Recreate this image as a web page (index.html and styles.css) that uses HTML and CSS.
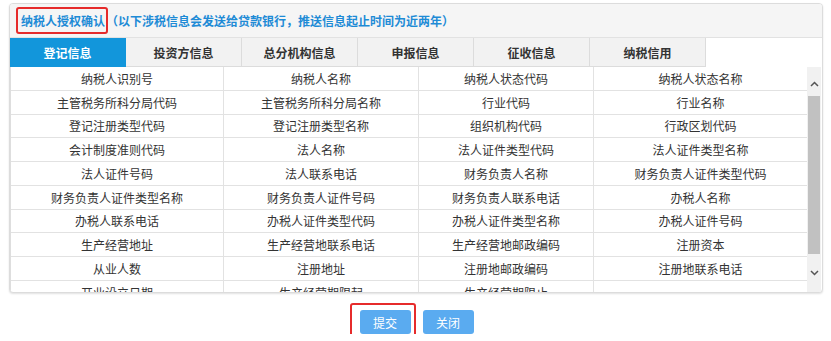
FILE: index.html
```html
<!DOCTYPE html>
<html>
	<head>
		<meta charset="utf-8">
		<title>纳税人授权确认</title>
		<link rel="stylesheet" href="styles.css">
	</head>
	<body>
		<div class="panel">
			<div class="panel-head">
				<span class="title mark">纳税人授权确认</span><span class="title">（以下涉税信息会发送给贷款银行，推送信息起止时间为近两年）</span>
			</div>
			<div class="tabs">
				<div class="tab active">登记信息</div>
				<div class="tab">投资方信息</div>
				<div class="tab">总分机构信息</div>
				<div class="tab">申报信息</div>
				<div class="tab">征收信息</div>
				<div class="tab">纳税信用</div>
			</div>
			<div class="body">
				<div class="grid">
					<table>
						<colgroup>
							<col style="width: 213px">
							<col style="width: 195px">
							<col style="width: 175px">
							<col style="width: 214px">
						</colgroup>
						<tr><td>纳税人识别号</td><td>纳税人名称</td><td>纳税人状态代码</td><td>纳税人状态名称</td></tr>
						<tr><td>主管税务所科分局代码</td><td>主管税务所科分局名称</td><td>行业代码</td><td>行业名称</td></tr>
						<tr><td>登记注册类型代码</td><td>登记注册类型名称</td><td>组织机构代码</td><td>行政区划代码</td></tr>
						<tr><td>会计制度准则代码</td><td>法人名称</td><td>法人证件类型代码</td><td>法人证件类型名称</td></tr>
						<tr><td>法人证件号码</td><td>法人联系电话</td><td>财务负责人名称</td><td>财务负责人证件类型代码</td></tr>
						<tr><td>财务负责人证件类型名称</td><td>财务负责人证件号码</td><td>财务负责人联系电话</td><td>办税人名称</td></tr>
						<tr><td>办税人联系电话</td><td>办税人证件类型代码</td><td>办税人证件类型名称</td><td>办税人证件号码</td></tr>
						<tr><td>生产经营地址</td><td>生产经营地联系电话</td><td>生产经营地邮政编码</td><td>注册资本</td></tr>
						<tr><td>从业人数</td><td>注册地址</td><td>注册地邮政编码</td><td>注册地联系电话</td></tr>
						<tr><td>开业设立日期</td><td>生产经营期限起</td><td>生产经营期限止</td><td></td></tr>
					</table>
				</div>
				<div class="scrollbar">
					<div class="sb-btn">
						<svg width="9" height="6" viewBox="0 0 9 6"><polyline points="1,5 4.5,1.5 8,5" fill="none" stroke="#555" stroke-width="1.5"/></svg>
					</div>
					<div class="sb-thumb"></div>
					<div class="sb-btn down">
						<svg width="9" height="6" viewBox="0 0 9 6"><polyline points="1,1 4.5,4.5 8,1" fill="none" stroke="#555" stroke-width="1.5"/></svg>
					</div>
				</div>
			</div>
		</div>
		<div class="actions">
			<button class="btn mark-btn">提交</button>
			<button class="btn">关闭</button>
		</div>
	</body>
</html>
```

FILE: styles.css
```css
* {
	margin: 0;
	padding: 0;
	box-sizing: border-box;
}

body {
	font-family: "Noto Sans CJK SC", "Noto Sans", sans-serif;
	font-size: 12px;
	color: #333;
	background: #fff;
}

/* 面板 */
.panel {
	margin: 3px 0 0 9px;
	width: 814px;
	border: 1px solid #dcdcdc;
	border-radius: 4px;
	box-shadow: 0 1px 2px rgba(0, 0, 0, .12);
	overflow: hidden;
	background: #fff;
}

.panel-head {
	height: 34px;
	display: flex;
	align-items: center;
	padding-left: 8px;
	background: #f5f5f5;
	border-bottom: 1px solid #e2e2e2;
}

.title {
	color: #1e8bd6;
	font-weight: bold;
	line-height: 23px;
}

/* 红框标注 */
.mark {
	position: relative;
	padding: 0 1px 0 3px;
}

.mark::after {
	content: "";
	position: absolute;
	left: -2px;
	top: -2px;
	right: -2px;
	bottom: -2px;
	border: 2px solid #e62b2b;
	border-radius: 3px;
}

/* 选项卡 */
.tabs {
	display: flex;
	height: 29px;
	background: #fff;
}

.tab {
	width: 116px;
	height: 29px;
	line-height: 29px;
	text-align: center;
	font-weight: bold;
	color: #333;
	background: #f2f2f2;
	border-right: 1px solid #dcdcdc;
	border-bottom: 1px solid #dcdcdc;
}

.tab.active {
	background: #1296db;
	color: #fff;
	border-color: #1296db;
}

/* 表格区 */
.body {
	display: flex;
	height: 225px;
}

.grid {
	flex: 1;
	overflow: hidden;
}

table {
	width: 797px;
	table-layout: fixed;
	border-collapse: separate;
	border-spacing: 0;
	border-left: 1px solid #dedede;
}

td {
	height: 23.75px;
	text-align: center;
	white-space: nowrap;
	color: #333;
	border-right: 1px solid #e2e2e2;
	border-bottom: 1px solid #e2e2e2;
}

/* 滚动条 */
.scrollbar {
	width: 14px;
	display: flex;
	flex-direction: column;
	align-items: center;
	background: #f1f1f1;
	margin-right: 1px;
}

.sb-btn {
	height: 29px;
	display: flex;
	align-items: center;
	justify-content: center;
	padding-top: 4px;
}

.sb-btn.down {
	margin-top: 7px;
	padding-top: 0;
	padding-bottom: 6px;
}

.sb-thumb {
	width: 12px;
	height: 158px;
	background: #c1c1c1;
}

/* 按钮 */
.actions {
	display: flex;
	justify-content: center;
	gap: 12px;
	margin-top: 17px;
	padding-left: 2px;
}

.btn {
	width: 51px;
	height: 24px;
	border: none;
	border-radius: 3px;
	background: #5aabf0;
	color: #fff;
	font-family: "Noto Sans CJK SC", "Noto Sans", sans-serif;
	font-size: 12px;
}

.mark-btn {
	position: relative;
}

.mark-btn::after {
	content: "";
	position: absolute;
	left: -10px;
	top: -7px;
	right: -5px;
	bottom: -4px;
	border: 2px solid #e62b2b;
	border-radius: 3px;
}
```
